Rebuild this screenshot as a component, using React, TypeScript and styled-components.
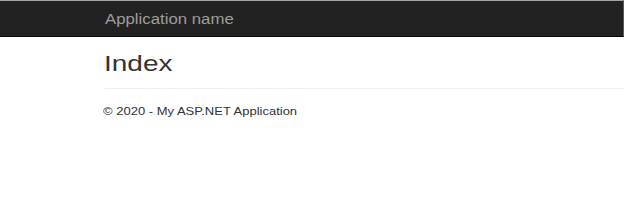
import React from 'react'
import styled, { createGlobalStyle } from 'styled-components'

const GlobalStyle = createGlobalStyle`
    html, body {
        margin: 0;
        padding: 0;
        background: #fff;
    }
    body {
        font-family: "Liberation Sans", Arial, sans-serif;
        color: #333;
        width: 624px;
        height: 204px;
        overflow: hidden;
    }
`

const Navbar = styled.nav`
    box-sizing: border-box;
    height: 37px;
    background-color: #222;
    border-top: 1px solid #a4a4a4;
    border-bottom: 1px solid #080808;
    border-right: 1px solid #5a5a5a;
    padding: 9.6px 0 0 105px;
`

const Brand = styled.a`
    display: inline-block;
    font-size: 16.8px;
    line-height: 1;
    color: #9d9d9d;
    text-decoration: none;
    transform: scaleY(0.86);
`

const Body = styled.main`
    padding-left: 104px;
`

const Title = styled.h2`
    margin: 12.7px 0 0;
    font-size: 28px;
    font-weight: 400;
    line-height: 1;
    transform: scaleY(0.8);
`

const Rule = styled.hr`
    margin: 10.5px 0 0;
    border: 0;
    border-top: 1px solid #eee;
    height: 0;
`

const Footer = styled.footer`
    margin: 15.3px 0 0 -1px;
    font-size: 13px;
    line-height: 1;
    transform: scaleY(0.9);
`

const Copy = styled.p`
    margin: 0;
`

const App: React.FC = () => {
    return (
        <>
            <GlobalStyle />
            <Navbar>
                <Brand href="#!">Application name</Brand>
            </Navbar>
            <Body>
                <Title>Index</Title>
                <Rule />
                <Footer>
                    <Copy>&copy; 2020 - My ASP.NET Application</Copy>
                </Footer>
            </Body>
        </>
    )
}

export default App
